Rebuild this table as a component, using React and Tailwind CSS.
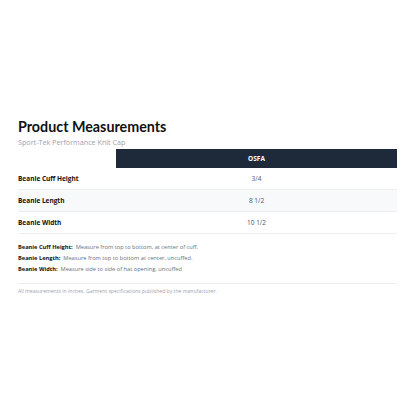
export default function App() {
    const rows = [
        { label: 'Beanie Cuff Height', value: '3/4' },
        { label: 'Beanie Length', value: '8 1/2' },
        { label: 'Beanie Width', value: '10 1/2' },
    ];

    const notes = [
        { label: 'Beanie Cuff Height:', text: 'Measure from top to bottom, at center of cuff.' },
        { label: 'Beanie Length:', text: 'Measure from top to bottom at center, uncuffed.' },
        { label: 'Beanie Width:', text: 'Measure side to side of hat opening, uncuffed' },
    ];

    return (
        <div className="w-[416px] h-[416px] bg-white pt-[118px] px-[18px] text-[#1f2937]" style={{ fontFamily: '"Open Sans", sans-serif' }}>
            <h1 className="text-[14.3px] leading-[18px] font-bold text-[#111]" style={{ fontFamily: 'Lato, sans-serif' }}>Product Measurements</h1>
            <p className="mt-[1px] text-[7.2px] leading-[10px] text-[#9ca3af]">Sport-Tek Performance Knit Cap</p>

            {/* Size table */}
            <div className="mt-[2px] w-[379px]">
                <div className="flex h-[19px]">
                    <div className="w-[98px]"></div>
                    <div className="flex-1 bg-[#1e2a3a] text-white text-[6.5px] font-bold flex items-center justify-center">OSFA</div>
                </div>
                {rows.map((row, i) => (
                    <div key={row.label} className={`flex h-[22px] items-center border-b border-[#eceef1] ${i === 1 ? 'bg-[#f8f9fa]' : 'bg-white'}`}>
                        <div className="w-[98px] text-[6.5px] font-bold text-[#111]">{row.label}</div>
                        <div className="flex-1 text-center text-[6.5px] text-[#4b5563]">{row.value}</div>
                    </div>
                ))}
            </div>

            {/* Notes */}
            <div className="w-[379px] pt-[8px] pb-[9px] border-b border-[#eceef1] flex flex-col gap-[1px]">
                {notes.map(n => (
                    <p key={n.label} className="text-[5.7px] leading-[10px] text-[#6b7280]">
                        <span className="font-bold text-[#111]">{n.label}</span>&nbsp; {n.text}
                    </p>
                ))}
            </div>

            <p className="mt-[3px] text-[5.1px] leading-[8px] text-[#9ca3af]">All measurements in inches. Garment specifications published by the manufacturer.</p>
        </div>
    );
}
